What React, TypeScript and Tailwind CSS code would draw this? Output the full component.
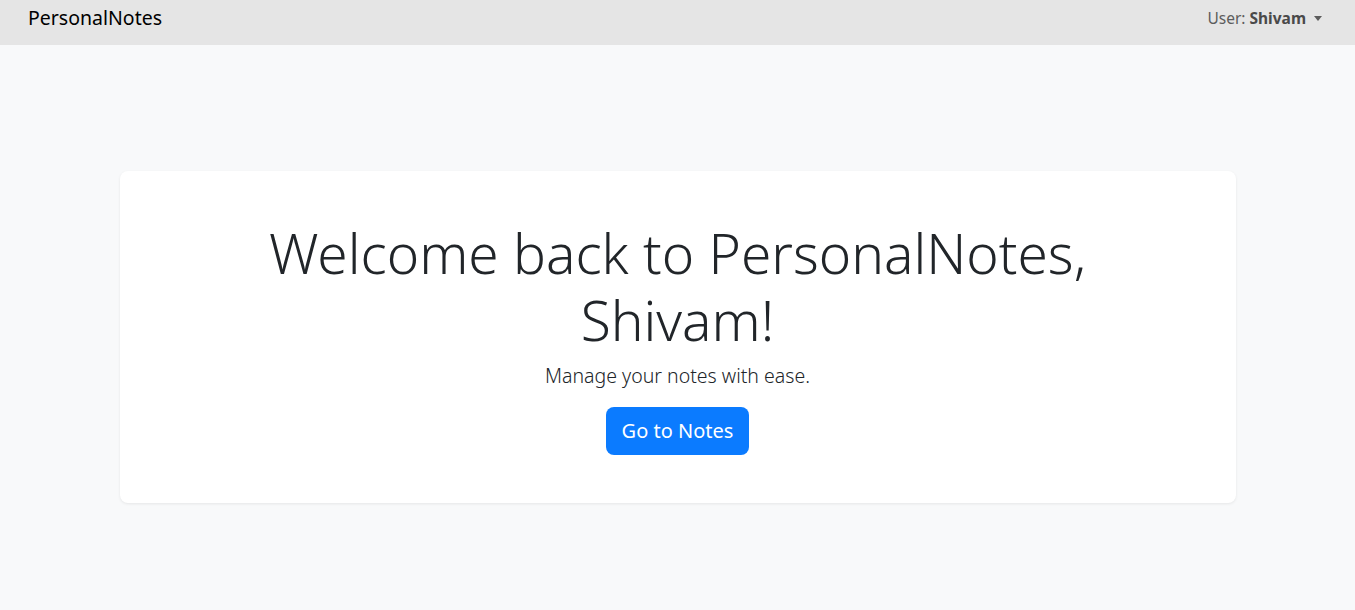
import React from 'react';

const font = { fontFamily: '"Noto Sans", "Open Sans", sans-serif' };

export default function App() {
  return (
    <div className="min-h-[610px] bg-[#f8f9fa] text-[#212529]" style={font}>
      <nav className="h-[45px] bg-[#e5e5e5] flex items-start justify-between pl-[28px] pr-[33px] pt-[4px]">
        <span className="text-[19.5px] text-black leading-[28px]">PersonalNotes</span>
        <button className="flex items-center text-[15.5px] leading-[28px] text-[#5c5c5c]">
          User:&nbsp;<b className="font-bold text-[#4a4a4a]">Shivam</b>
          <span className="ml-[8px] w-0 h-0 border-l-[4px] border-r-[4px] border-t-[5px] border-l-transparent border-r-transparent border-t-[#5c5c5c]" />
        </button>
      </nav>
      <div className="w-[1116px] mx-auto mt-[126px] bg-white rounded-[8px] shadow-[0_1px_3px_rgba(0,0,0,0.08)] p-[48px] flex flex-col items-center text-center">
        <h1 className="text-[55px] font-light leading-[67px] mb-[8px] w-[840px]">
          Welcome back to PersonalNotes, Shivam!
        </h1>
        <p className="text-[19.5px] font-light leading-[30px] mb-[16px]">Manage your notes with ease.</p>
        <button className="h-[48px] px-[16px] rounded-[8px] bg-[#0b7bff] text-white text-[20px]">Go to Notes</button>
      </div>
    </div>
  );
}
